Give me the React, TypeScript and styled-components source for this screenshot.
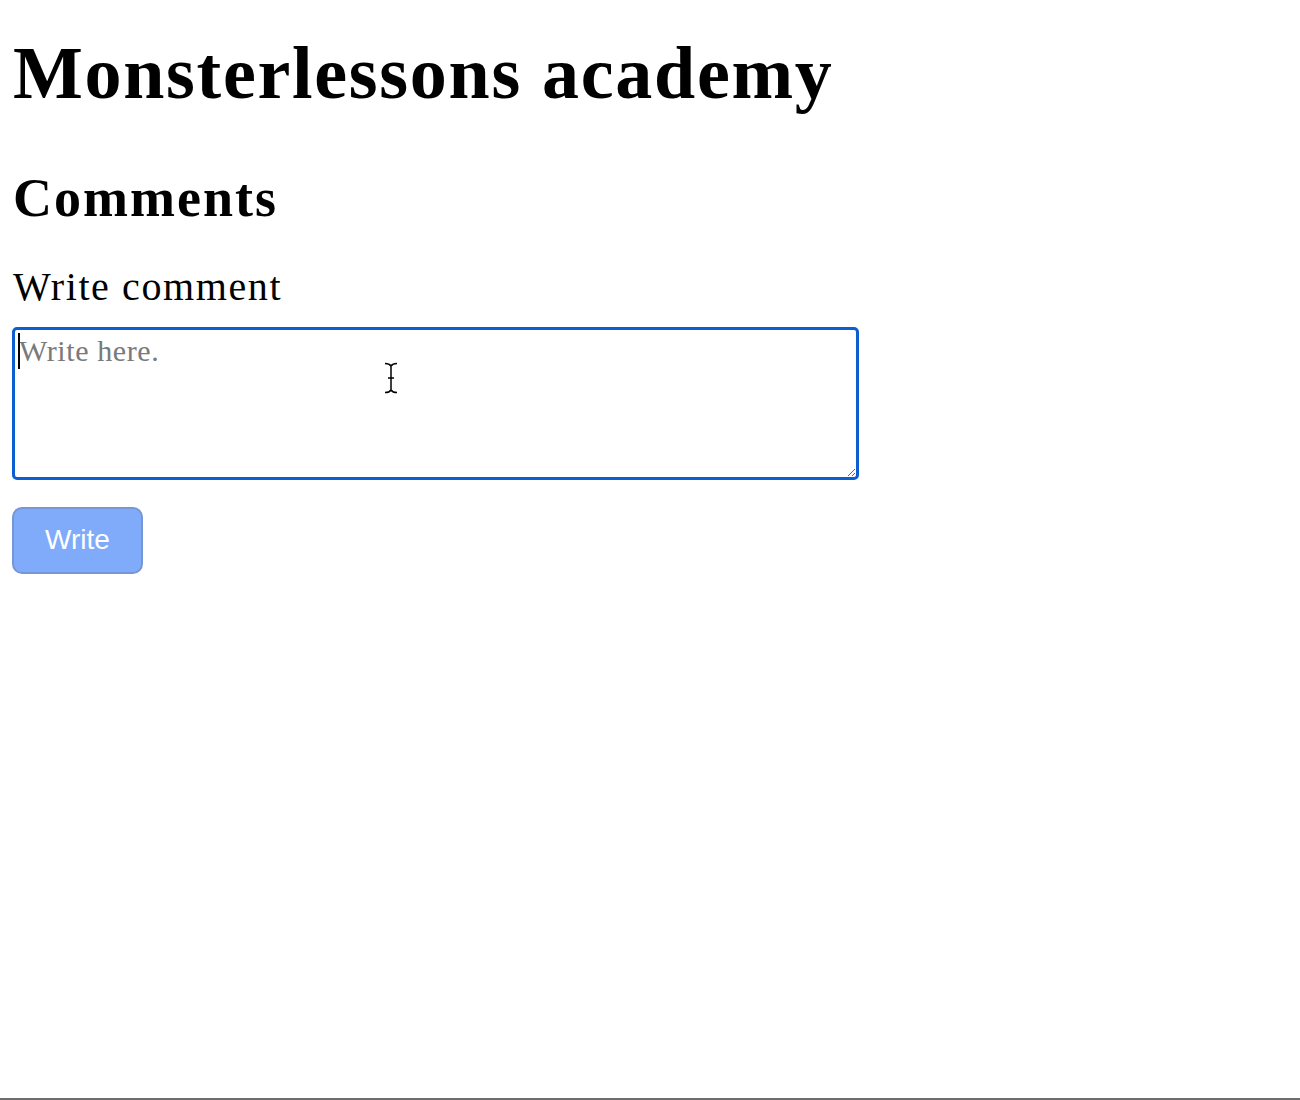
import * as React from 'react';
import styled, { createGlobalStyle } from 'styled-components';

const GlobalStyle = createGlobalStyle`
  html, body {
    margin: 0;
    padding: 0;
    background: #ffffff;
  }
  body {
    font-family: "Liberation Serif", "Times New Roman", serif;
    color: #000000;
  }
`;

const Page = styled.div`
  box-sizing: border-box;
  min-height: 1100px;
  padding: 0 12px;
  display: flex;
  flex-direction: column;
  align-items: flex-start;
  border-bottom: 2px solid #6e6e6e;
`;

const Title = styled.h1`
  margin: 29px 0 0 1px;
  font-size: 74px;
  line-height: 1.2;
  font-weight: 700;
  letter-spacing: 1.7px;
`;

const SectionTitle = styled.h2`
  margin: 48px 0 0 1px;
  font-size: 54px;
  line-height: 1.2;
  font-weight: 700;
  letter-spacing: 2px;
`;

const Form = styled.form`
  display: flex;
  flex-direction: column;
  align-items: flex-start;
  margin: 32px 0 0;
`;

const Label = styled.label`
  margin-left: 1px;
  font-size: 40px;
  line-height: 1.2;
  letter-spacing: 1.6px;
`;

const FieldWrap = styled.div`
  position: relative;
  margin-top: 16px;
`;

const TextArea = styled.textarea`
  box-sizing: border-box;
  display: block;
  width: 847px;
  height: 153px;
  margin: 0;
  padding: 3px 4px;
  border: 3px solid #0b5fd0;
  border-radius: 5px;
  outline: none;
  font-family: "Liberation Serif", "Times New Roman", serif;
  font-size: 30px;
  line-height: 1.2;
  letter-spacing: 0.6px;
  color: #000;
  background: #fff;

  &::placeholder {
    color: #7a7a7a;
  }
`;

const Caret = styled.span`
  position: absolute;
  left: 6px;
  top: 6px;
  width: 2px;
  height: 36px;
  background: #000;
`;

const Pointer = styled.svg`
  position: absolute;
  left: 372px;
  top: 35px;
  pointer-events: none;
`;

const SubmitButton = styled.button`
  margin-top: 27px;
  width: 131px;
  height: 67px;
  border: 2px solid #7597d6;
  border-radius: 10px;
  background: #80abfa;
  color: #ffffff;
  font-family: "Liberation Sans", Arial, sans-serif;
  font-size: 28px;
  cursor: pointer;
`;

function IBeam() {
  return (
    <Pointer width="14" height="32" viewBox="0 0 14 32">
      <path
        d="M1 1.5 C4 1.5 6 2.5 7 4 C8 2.5 10 1.5 13 1.5 M7 4 L7 28 M1 30.5 C4 30.5 6 29.5 7 28 C8 29.5 10 30.5 13 30.5 M4 16 L10 16"
        fill="none"
        stroke="#ffffff"
        strokeWidth="3.5"
      />
      <path
        d="M1 1.5 C4 1.5 6 2.5 7 4 C8 2.5 10 1.5 13 1.5 M7 4 L7 28 M1 30.5 C4 30.5 6 29.5 7 28 C8 29.5 10 30.5 13 30.5 M4 16 L10 16"
        fill="none"
        stroke="#000000"
        strokeWidth="1.5"
      />
    </Pointer>
  );
}

export default function App() {
  const [text, setText] = React.useState('');

  return (
    <>
      <GlobalStyle />
      <Page>
        <Title>Monsterlessons academy</Title>
        <SectionTitle>Comments</SectionTitle>
        <Form onSubmit={(e) => e.preventDefault()}>
          <Label htmlFor="comment">Write comment</Label>
          <FieldWrap>
            <TextArea
              id="comment"
              placeholder="Write here."
              value={text}
              onChange={(e) => setText(e.target.value)}
            />
            <Caret />
            <IBeam />
          </FieldWrap>
          <SubmitButton type="submit" disabled={text.length === 0}>
            Write
          </SubmitButton>
        </Form>
      </Page>
    </>
  );
}
